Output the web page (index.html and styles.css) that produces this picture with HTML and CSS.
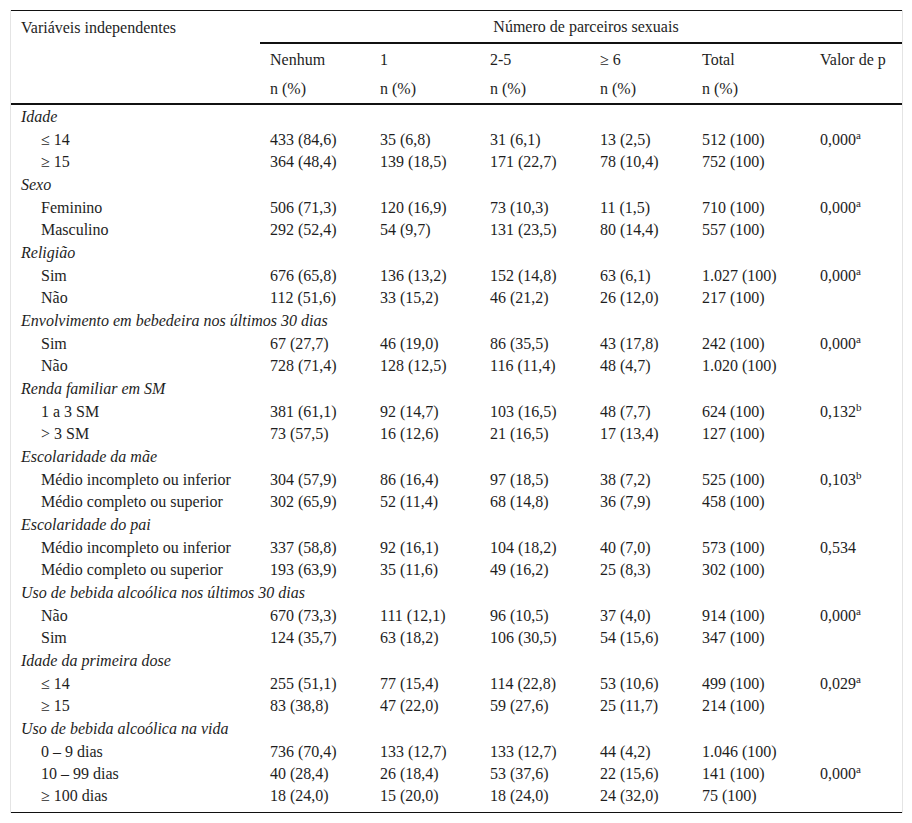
FILE: index.html
```html
<!DOCTYPE html>
<html lang="pt">
<head>
<meta charset="utf-8">
<title>Tabela</title>
<link rel="stylesheet" href="styles.css">
</head>
<body>
<div class="wrap">
<table class="tbl">
<colgroup>
<col class="c-var"><col class="c-n"><col class="c-n"><col class="c-n"><col class="c-6"><col class="c-tot"><col class="c-p">
</colgroup>
<thead>
<tr class="h1">
<th rowspan="3" class="hvar">Variáveis independentes</th>
<th colspan="6" class="hgroup">Número de parceiros sexuais</th>
</tr>
<tr class="h2">
<th>Nenhum</th><th>1</th><th>2-5</th><th>≥ 6</th><th>Total</th><th>Valor de p</th>
</tr>
<tr class="h3">
<th>n (%)</th><th>n (%)</th><th>n (%)</th><th>n (%)</th><th>n (%)</th><th></th>
</tr>
</thead>
<tbody>
<tr class="cat"><td colspan="7">Idade</td></tr>
<tr><td class="ind">≤ 14</td><td>433 (84,6)</td><td>35 (6,8)</td><td>31 (6,1)</td><td>13 (2,5)</td><td>512 (100)</td><td>0,000<sup>a</sup></td></tr>
<tr><td class="ind">≥ 15</td><td>364 (48,4)</td><td>139 (18,5)</td><td>171 (22,7)</td><td>78 (10,4)</td><td>752 (100)</td><td></td></tr>

<tr class="cat"><td colspan="7">Sexo</td></tr>
<tr><td class="ind">Feminino</td><td>506 (71,3)</td><td>120 (16,9)</td><td>73 (10,3)</td><td>11 (1,5)</td><td>710 (100)</td><td>0,000<sup>a</sup></td></tr>
<tr><td class="ind">Masculino</td><td>292 (52,4)</td><td>54 (9,7)</td><td>131 (23,5)</td><td>80 (14,4)</td><td>557 (100)</td><td></td></tr>

<tr class="cat"><td colspan="7">Religião</td></tr>
<tr><td class="ind">Sim</td><td>676 (65,8)</td><td>136 (13,2)</td><td>152 (14,8)</td><td>63 (6,1)</td><td>1.027 (100)</td><td>0,000<sup>a</sup></td></tr>
<tr><td class="ind">Não</td><td>112 (51,6)</td><td>33 (15,2)</td><td>46 (21,2)</td><td>26 (12,0)</td><td>217 (100)</td><td></td></tr>

<tr class="cat"><td colspan="7">Envolvimento em bebedeira nos últimos 30 dias</td></tr>
<tr><td class="ind">Sim</td><td>67 (27,7)</td><td>46 (19,0)</td><td>86 (35,5)</td><td>43 (17,8)</td><td>242 (100)</td><td>0,000<sup>a</sup></td></tr>
<tr><td class="ind">Não</td><td>728 (71,4)</td><td>128 (12,5)</td><td>116 (11,4)</td><td>48 (4,7)</td><td>1.020 (100)</td><td></td></tr>

<tr class="cat"><td colspan="7">Renda familiar em SM</td></tr>
<tr><td class="ind">1 a 3 SM</td><td>381 (61,1)</td><td>92 (14,7)</td><td>103 (16,5)</td><td>48 (7,7)</td><td>624 (100)</td><td>0,132<sup>b</sup></td></tr>
<tr><td class="ind">&gt; 3 SM</td><td>73 (57,5)</td><td>16 (12,6)</td><td>21 (16,5)</td><td>17 (13,4)</td><td>127 (100)</td><td></td></tr>

<tr class="cat"><td colspan="7">Escolaridade da mãe</td></tr>
<tr><td class="ind">Médio incompleto ou inferior</td><td>304 (57,9)</td><td>86 (16,4)</td><td>97 (18,5)</td><td>38 (7,2)</td><td>525 (100)</td><td>0,103<sup>b</sup></td></tr>
<tr><td class="ind">Médio completo ou superior</td><td>302 (65,9)</td><td>52 (11,4)</td><td>68 (14,8)</td><td>36 (7,9)</td><td>458 (100)</td><td></td></tr>

<tr class="cat"><td colspan="7">Escolaridade do pai</td></tr>
<tr><td class="ind">Médio incompleto ou inferior</td><td>337 (58,8)</td><td>92 (16,1)</td><td>104 (18,2)</td><td>40 (7,0)</td><td>573 (100)</td><td>0,534</td></tr>
<tr><td class="ind">Médio completo ou superior</td><td>193 (63,9)</td><td>35 (11,6)</td><td>49 (16,2)</td><td>25 (8,3)</td><td>302 (100)</td><td></td></tr>

<tr class="cat"><td colspan="7">Uso de bebida alcoólica nos últimos 30 dias</td></tr>
<tr><td class="ind">Não</td><td>670 (73,3)</td><td>111 (12,1)</td><td>96 (10,5)</td><td>37 (4,0)</td><td>914 (100)</td><td>0,000<sup>a</sup></td></tr>
<tr><td class="ind">Sim</td><td>124 (35,7)</td><td>63 (18,2)</td><td>106 (30,5)</td><td>54 (15,6)</td><td>347 (100)</td><td></td></tr>

<tr class="cat"><td colspan="7">Idade da primeira dose</td></tr>
<tr><td class="ind">≤ 14</td><td>255 (51,1)</td><td>77 (15,4)</td><td>114 (22,8)</td><td>53 (10,6)</td><td>499 (100)</td><td>0,029<sup>a</sup></td></tr>
<tr><td class="ind">≥ 15</td><td>83 (38,8)</td><td>47 (22,0)</td><td>59 (27,6)</td><td>25 (11,7)</td><td>214 (100)</td><td></td></tr>

<tr class="cat"><td colspan="7">Uso de bebida alcoólica na vida</td></tr>
<tr><td class="ind">0 – 9 dias</td><td>736 (70,4)</td><td>133 (12,7)</td><td>133 (12,7)</td><td>44 (4,2)</td><td>1.046 (100)</td><td></td></tr>
<tr><td class="ind">10 – 99 dias</td><td>40 (28,4)</td><td>26 (18,4)</td><td>53 (37,6)</td><td>22 (15,6)</td><td>141 (100)</td><td>0,000<sup>a</sup></td></tr>
<tr class="last"><td class="ind">≥ 100 dias</td><td>18 (24,0)</td><td>15 (20,0)</td><td>18 (24,0)</td><td>24 (32,0)</td><td>75 (100)</td><td></td></tr>
</tbody>
</table>
</div>
</body>
</html>
```

FILE: styles.css
```css
html, body {
  margin: 0;
  padding: 0;
  background: #ffffff;
}

body {
  font-family: "Liberation Serif", "Times New Roman", serif;
  font-size: 16px;
  color: #1e1e1e;
}

.wrap {
  margin: 10px 0 0 10px;
  width: 891px;
  border-left: 1px solid #e4e4e4;
  border-right: 1px solid #e4e4e4;
}

.tbl {
  width: 100%;
  border-collapse: collapse;
  table-layout: fixed;
  border-top: 1px solid #111;
  border-bottom: 1px solid #111;
}

.c-var { width: 249px; }
.c-n { width: 110px; }
.c-6 { width: 102px; }
.c-tot { width: 118px; }
.c-p { width: auto; }

.tbl th,
.tbl td {
  font-weight: normal;
  text-align: left;
  vertical-align: top;
  padding: 3px 0 3px 10px;
  line-height: 16px;
  height: 16px;
  white-space: nowrap;
}

.tbl th.hvar {
  padding-top: 9px;
}

.h1 th.hgroup {
  height: 32px;
  padding: 8px 0 0 10px;
  box-sizing: border-box;
  text-align: center;
  border-bottom: 2px solid #111;
}

.h2 th {
  padding-top: 8px;
  padding-bottom: 6px;
}

.h3 th {
  padding-top: 7px;
  padding-bottom: 6px;
}

thead tr.h3 th,
thead th.hvar {
  border-bottom: 2px solid #111;
}

.tbl td.ind {
  padding-left: 30px;
}

.cat td {
  font-style: italic;
  padding-top: 4px;
  padding-bottom: 4px;
}

.last td {
  padding-bottom: 8px;
}

sup {
  font-size: 11px;
  line-height: 0;
  vertical-align: 6px;
}
```
